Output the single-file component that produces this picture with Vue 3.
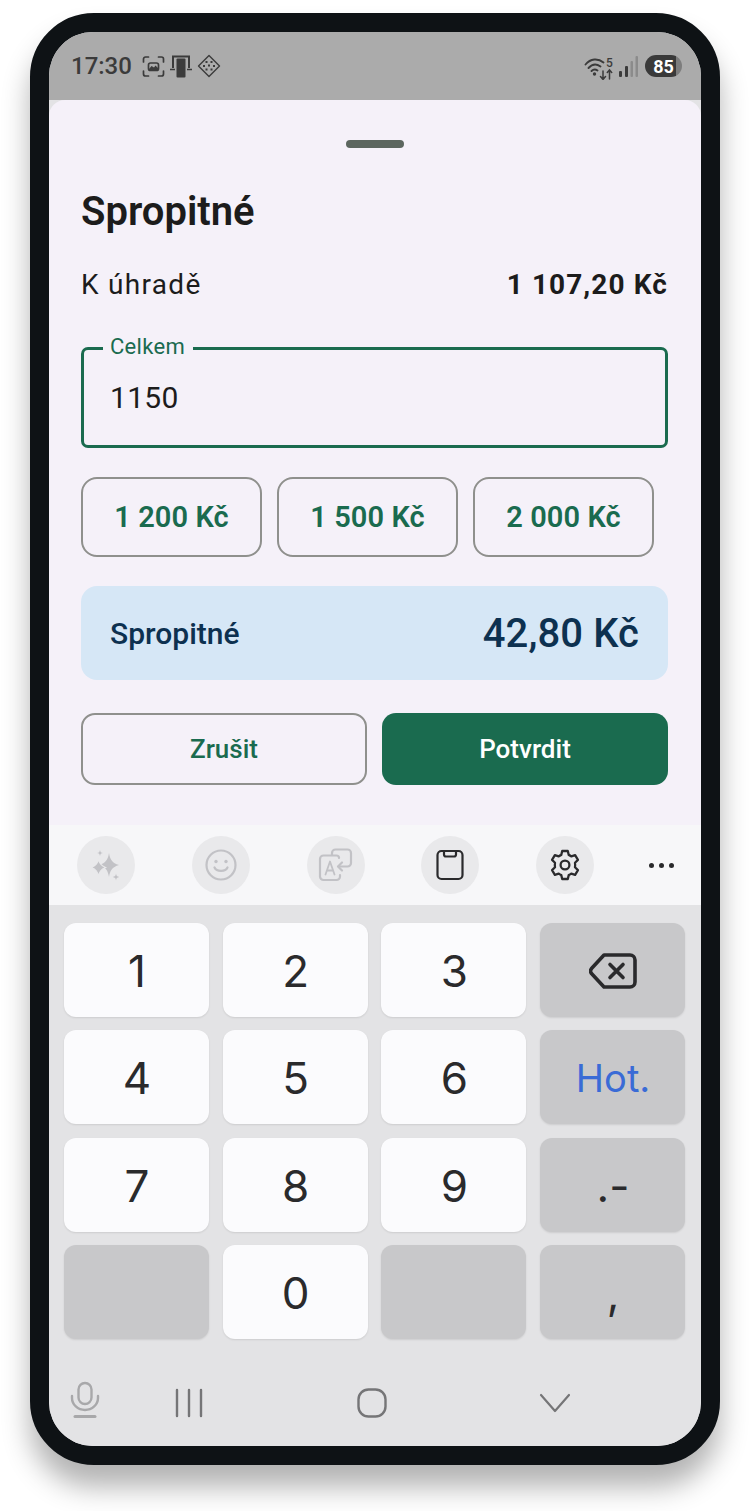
<script setup>
const chips = ['1 200 Kč', '1 500 Kč', '2 000 Kč']

const keyRows = [
  [{ label: '1' }, { label: '2' }, { label: '3' }, { label: '', kind: 'back' }],
  [{ label: '4' }, { label: '5' }, { label: '6' }, { label: 'Hot.', kind: 'done' }],
  [{ label: '7' }, { label: '8' }, { label: '9' }, { label: '.-', kind: 'fn' }],
  [{ label: '', kind: 'fn' }, { label: '0' }, { label: '', kind: 'fn' }, { label: ',', kind: 'fn' }],
]
</script>

<template>
  <main class="page">
    <div class="phone">
      <div class="screen">
        <header class="status">
          <div class="status-left">
            <span class="time">17:30</span>
            <svg class="st-icon" width="23" height="23" viewBox="0 0 23 23" fill="none" stroke="#3b3b3b" stroke-width="1.7" stroke-linecap="round">
              <path d="M1.500 7V4A2 2 0 0 1 3.500 2H6.500M16.500 2H19.500A2 2 0 0 1 21.500 4V7M21.500 16V19A2 2 0 0 1 19.500 21H16.500M6.500 21H3.500A2 2 0 0 1 1.500 19V16" />
              <rect x="6.500" y="8" width="10" height="7.500" rx="2" />
              <path d="M7 14L9.500 11L12 12.500L13.500 10.500L16 13V15H7Z" fill="#3b3b3b" stroke="none" />
            </svg>
            <svg class="st-icon" width="24" height="24" viewBox="0 0 24 24" fill="none">
              <path d="M3 1.500H21V14H19V3.500H5V14H3Z" fill="#3b3b3b" />
              <path d="M1 15.500H6M18 15.500H23" stroke="#3b3b3b" stroke-width="1.400" />
              <rect x="7.500" y="4.500" width="9" height="19" rx="1" fill="#3b3b3b" />
            </svg>
            <svg class="st-icon" width="24" height="24" viewBox="0 0 24 24" fill="none">
              <path d="M12 1.500L22.500 12L12 22.500L1.500 12Z" stroke="#3b3b3b" stroke-width="1.400" stroke-linejoin="round" />
              <path d="M8.500 7H10.500V9H8.500ZM13.500 7H15.500V9H13.500ZM6 11H8V13H6ZM11 10.500H13V12.500H11ZM16 11H18V13H16ZM8.500 14.500H10.500V16.500H8.500ZM13.500 14.500H15.500V16.500H13.500Z" fill="#3b3b3b" />
            </svg>
          </div>
          <div class="status-right">
            <svg width="30" height="28" viewBox="0 0 30 28" fill="none" stroke="#3b3b3b" stroke-width="1.900" stroke-linecap="round">
              <path d="M1.500 12.500C6.500 6.500 14 6 19.500 10.500" />
              <path d="M4.500 16C8 12 12.500 11.500 16.500 14.500" />
              <path d="M7.500 19C9.500 17 11.500 17 13.500 18.500" />
              <circle cx="10.500" cy="22" r="1.700" fill="#3b3b3b" stroke="none" />
              <path d="M19 19V27M16.500 24.500L19 27.500L21.500 24.500M25.500 27V18.500M23.300 20.500L25.500 18L27.700 20.500" stroke-width="1.500" />
              <text x="22" y="15" class="wifi-five">5</text>
            </svg>
            <svg class="signal" width="20" height="22" viewBox="0 0 20 22">
              <rect x="1" y="16" width="3" height="6" rx="1" fill="#3b3b3b" />
              <rect x="7" y="11" width="3" height="11" rx="1" fill="#3b3b3b" />
              <rect x="12.500" y="6" width="2.500" height="16" rx="1" fill="#8b8b8b" />
              <rect x="17.500" y="1" width="2.500" height="21" rx="1" fill="#8b8b8b" />
            </svg>
            <div class="battery"><span class="battery-num">85</span></div>
          </div>
        </header>

        <section class="sheet">
          <div class="handle"></div>
          <h1 class="title">Spropitné</h1>
          <div class="due">
            <span>K úhradě</span>
            <strong>1 107,20 Kč</strong>
          </div>
          <div class="field">
            <span class="field-label">Celkem</span>
            <span class="field-value">1150</span>
          </div>
          <div class="chips">
            <button v-for="chip in chips" :key="chip" class="chip" type="button">{{ chip }}</button>
          </div>
          <div class="tip">
            <span class="tip-label">Spropitné</span>
            <span class="tip-value">42,80 Kč</span>
          </div>
          <div class="actions">
            <button class="btn btn-outline" type="button">Zrušit</button>
            <button class="btn btn-solid" type="button">Potvrdit</button>
          </div>
        </section>

        <section class="toolbar">
          <div class="tool">
            <svg width="32" height="32" viewBox="0 0 32 32" fill="#c2c2c6">
              <path d="M19 4C20 10 22 14 29 16C22 18 20 22 19 28C18 22 16 18 9 16C16 14 18 10 19 4Z" />
              <path d="M8.500 9.500C9 14 10.500 16.500 15.500 18.500C10.500 20.500 9 23 8.500 28C8 23 6.500 20.500 1.500 18.500C6.500 16.500 8 14 8.500 9.500Z" stroke="#e9e9eb" stroke-width="1.200" />
              <path d="M10 1C10.300 3 11 3.700 13 4C11 4.300 10.300 5 10 7C9.700 5 9 4.300 7 4C9 3.700 9.700 3 10 1Z" />
              <path d="M26 24.500C26.300 26.700 27 27.500 29.300 28C27 28.500 26.300 29.300 26 31.500C25.700 29.300 25 28.500 22.700 28C25 27.500 25.700 26.700 26 24.500Z" />
            </svg>
          </div>
          <div class="tool">
            <svg width="32" height="32" viewBox="0 0 32 32" fill="none" stroke="#c2c2c6" stroke-width="2.200" stroke-linecap="round">
              <circle cx="16" cy="16" r="14.500" />
              <path d="M9.500 18.500C11.500 23 20.500 23 22.500 18.500" />
              <circle cx="11" cy="12.500" r="1.700" fill="#c2c2c6" stroke="none" />
              <circle cx="21" cy="12.500" r="1.700" fill="#c2c2c6" stroke="none" />
            </svg>
          </div>
          <div class="tool">
            <svg width="36" height="34" viewBox="0 0 36 34" fill="none" stroke="#c2c2c6" stroke-width="2.200" stroke-linecap="round" stroke-linejoin="round">
              <path d="M14 7V5A3.500 3.500 0 0 1 17.500 1.500H29.500A3.500 3.500 0 0 1 33 5V15A3.500 3.500 0 0 1 29.500 18.500H21" />
              <path d="M24 14.500L20 18.500L24 22.500" />
              <path d="M21 10V9.500A2.500 2.500 0 0 0 18.500 7.500H5.500A3.500 3.500 0 0 0 2 11V28.500A3.500 3.500 0 0 0 5.500 32H18.500A3.500 3.500 0 0 0 22 28.500V27" />
              <path d="M7.500 26.500L12 13.500L16.500 26.500M9 22.500H15" stroke-width="1.800" />
            </svg>
          </div>
          <div class="tool">
            <svg width="28" height="32" viewBox="0 0 28 32" fill="none" stroke="#2a2a2c" stroke-width="2.200" stroke-linejoin="round">
              <rect x="1.500" y="2" width="25" height="28" rx="4" />
              <path d="M8 2H20V5.500A2 2 0 0 1 18 7.500H10A2 2 0 0 1 8 5.500Z" />
            </svg>
          </div>
          <div class="tool">
            <svg width="32" height="32" viewBox="0 0 24 24" fill="none" stroke="#2a2a2c" stroke-width="1.700" stroke-linejoin="round">
              <path d="M9.900 1.500H14.100L14.800 4.400C15.500 4.700 16.100 5 16.700 5.500L19.600 4.600L21.700 8.200L19.500 10.300C19.600 11.100 19.600 12.900 19.500 13.700L21.700 15.800L19.600 19.400L16.700 18.500C16.100 19 15.500 19.300 14.800 19.600L14.100 22.500H9.900L9.200 19.600C8.500 19.300 7.900 19 7.300 18.500L4.400 19.400L2.300 15.800L4.500 13.700C4.400 12.900 4.400 11.100 4.500 10.300L2.300 8.200L4.400 4.600L7.300 5.500C7.900 5 8.500 4.700 9.200 4.400Z" />
              <circle cx="12" cy="12" r="3.300" />
            </svg>
          </div>
          <div class="more">
            <i></i><i></i><i></i>
          </div>
        </section>

        <section class="keyboard">
          <div v-for="(row, r) in keyRows" :key="r" class="key-row">
            <button
              v-for="(key, k) in row"
              :key="k"
              class="key"
              :class="{ 'key-fn': key.kind, 'key-done': key.kind === 'done' }"
              type="button"
            >
              <svg v-if="key.kind === 'back'" width="48" height="36" viewBox="0 0 48 36" fill="none" stroke="#2a2a2c" stroke-width="3.600" stroke-linejoin="round" stroke-linecap="round">
                <path d="M15 2H41A5 5 0 0 1 46 7V29A5 5 0 0 1 41 34H15L2.500 20.500A4 4 0 0 1 2.500 15.500Z" />
                <path d="M21 11.500L34 24.500M34 11.500L21 24.500" />
              </svg>
              <template v-else>{{ key.label }}</template>
            </button>
          </div>
          <div class="nav">
            <svg class="nav-mic" width="30" height="38" viewBox="0 0 30 38" fill="none" stroke="#a8a8aa" stroke-width="2.400" stroke-linecap="round">
              <rect x="8.500" y="2" width="13" height="21" rx="6.500" />
              <path d="M2 15V17A13 12 0 0 0 28 17V15" />
              <path d="M5 35.500H25" stroke-width="3" />
            </svg>
            <svg class="nav-recent" width="28" height="30" viewBox="0 0 28 30" fill="none" stroke="#757577" stroke-width="2.400" stroke-linecap="round">
              <path d="M2 2V28M14 2V28M26 2V28" />
            </svg>
            <svg class="nav-home" width="30" height="30" viewBox="0 0 30 30" fill="none" stroke="#757577" stroke-width="2.400">
              <rect x="1.500" y="1.500" width="27" height="27" rx="10" />
            </svg>
            <svg class="nav-back" width="32" height="20" viewBox="0 0 32 20" fill="none" stroke="#757577" stroke-width="2.200" stroke-linecap="round" stroke-linejoin="round">
              <path d="M2 2L16 18L30 2" />
            </svg>
          </div>
        </section>
      </div>
    </div>
  </main>
</template>

<style>
html,
body {
  background: #fff;
}
</style>

<style scoped>
.page {
  width: 750px;
  height: 1511px;
  padding: 13px 30px 0;
  box-sizing: border-box;
  overflow: hidden;
  font-family: Roboto, "Noto Sans", sans-serif;
  background: #fff;
}

.phone {
  width: 690px;
  height: 1452px;
  box-sizing: border-box;
  border: 19px solid #0e1215;
  border-radius: 64px;
  background: #0e1215;
  box-shadow: 0 22px 28px rgba(0, 0, 0, 0.3);
}

.screen {
  height: 100%;
  border-radius: 44px;
  overflow: hidden;
  display: flex;
  flex-direction: column;
  background: #e3e3e5;
}

.status {
  height: 68px;
  flex: none;
  padding: 0 19px 0 22px;
  display: flex;
  justify-content: space-between;
  align-items: center;
  background: #ababab;
  color: #3b3b3b;
}

.status-left,
.status-right {
  display: flex;
  align-items: center;
}

.time {
  font-size: 24px;
  font-weight: 500;
  margin-right: 10px;
}

.st-icon {
  margin-right: 4px;
}

.wifi-five {
  font: 500 12px Roboto, sans-serif;
  fill: #3b3b3b;
  stroke: none;
}

.signal {
  margin: 0 7px 0 4px;
}

.battery {
  width: 37px;
  height: 22px;
  border-radius: 11px;
  background: linear-gradient(90deg, #3a3a3a 85%, #7d7d7d 85%);
  color: #fff;
  display: flex;
  align-items: center;
  justify-content: center;
}

.battery-num {
  font-size: 18px;
  font-weight: 700;
}

.sheet {
  height: 725px;
  flex: none;
  box-sizing: border-box;
  padding: 40px 33px 0 32px;
  border-radius: 16px 16px 0 0;
  background: #f5f1f9;
  display: flex;
  flex-direction: column;
}

.handle {
  width: 58px;
  height: 8px;
  flex: none;
  align-self: center;
  border-radius: 4px;
  background: #5c665f;
}

.title {
  margin: 41px 0 0;
  font-size: 40px;
  line-height: 46px;
  font-weight: 600;
  color: #1c1c1c;
}

.due {
  margin-top: 31px;
  height: 36px;
  display: flex;
  justify-content: space-between;
  align-items: center;
  font-size: 28px;
  letter-spacing: 1.3px;
  color: #1c1c1c;
}

.due strong {
  font-weight: 700;
  letter-spacing: 1.1px;
}

.field {
  position: relative;
  margin-top: 45px;
  height: 101px;
  flex: none;
  box-sizing: border-box;
  border: 3.500px solid #1a6b4f;
  border-radius: 7px;
  padding-left: 26px;
  display: flex;
  align-items: center;
}

.field-label {
  position: absolute;
  left: 19px;
  top: -16px;
  padding: 0 8px 0 7px;
  font-size: 22px;
  line-height: 26px;
  letter-spacing: 0.3px;
  color: #1a6b4f;
  background: #f5f1f9;
}

.field-value {
  font-size: 30px;
  letter-spacing: 0.3px;
  color: #1c1c1c;
}

.chips {
  margin-top: 29px;
  display: flex;
  gap: 15px;
}

.chip {
  width: 181px;
  height: 80px;
  box-sizing: border-box;
  border: 2px solid #8f908d;
  border-radius: 16px;
  background: transparent;
  font-family: inherit;
  font-size: 29px;
  font-weight: 600;
  letter-spacing: 0.1px;
  color: #1a6b4f;
}

.tip {
  margin-top: 29px;
  height: 94px;
  flex: none;
  padding: 0 29px;
  border-radius: 16px;
  background: #d6e7f6;
  color: #0d3150;
  display: flex;
  justify-content: space-between;
  align-items: center;
}

.tip-label {
  font-size: 30px;
  font-weight: 500;
}

.tip-value {
  font-size: 40px;
  font-weight: 500;
  letter-spacing: 0.1px;
}

.actions {
  margin-top: 33px;
  display: grid;
  grid-template-columns: 1fr 1fr;
  gap: 15px;
}

.btn {
  height: 72px;
  padding: 0;
  box-sizing: border-box;
  border-radius: 14px;
  font-family: inherit;
  font-size: 26px;
  font-weight: 500;
}

.btn-outline {
  border: 2px solid #8f908d;
  background: transparent;
  color: #1a6b4f;
}

.btn-solid {
  border: none;
  background: #1a6b4f;
  color: #fff;
}

.toolbar {
  height: 80px;
  flex: none;
  padding-left: 28px;
  display: flex;
  gap: 56.750px;
  align-items: center;
  background: #f7f7f9;
}

.tool {
  width: 58px;
  height: 58px;
  flex: none;
  border-radius: 50%;
  background: #e9e9eb;
  display: flex;
  align-items: center;
  justify-content: center;
}

.more {
  margin-left: -2px;
  display: flex;
  gap: 5px;
}

.more i {
  width: 5px;
  height: 5px;
  border-radius: 50%;
  background: #2a2a2c;
}

.keyboard {
  flex: 1;
  padding: 18px 16px 0 15px;
  display: flex;
  flex-direction: column;
  gap: 13.300px;
  background: #e3e3e5;
}

.key-row {
  display: grid;
  grid-template-columns: repeat(4, 145px);
  column-gap: 13.700px;
}

.key {
  height: 94px;
  padding: 2px 0 0 1px;
  border: none;
  border-radius: 12px;
  background: #fbfbfd;
  box-shadow: 0 1px 2px rgba(0, 0, 0, 0.1);
  font-family: Inter, Roboto, sans-serif;
  font-size: 44px;
  font-weight: 400;
  color: #2a2a2c;
  display: flex;
  align-items: center;
  justify-content: center;
}

.key-fn {
  background: #c8c8ca;
}

.key-done {
  font-size: 38px;
  color: #3a6bd6;
}

.nav {
  flex: 1;
  padding-top: 8px;
  display: flex;
  align-items: center;
}

.nav-mic {
  margin-top: -6px;
  margin-left: 6px;
  margin-right: 75px;
}

.nav-recent {
  margin-right: 154px;
}

.nav-back {
  margin-left: 152px;
}
</style>
